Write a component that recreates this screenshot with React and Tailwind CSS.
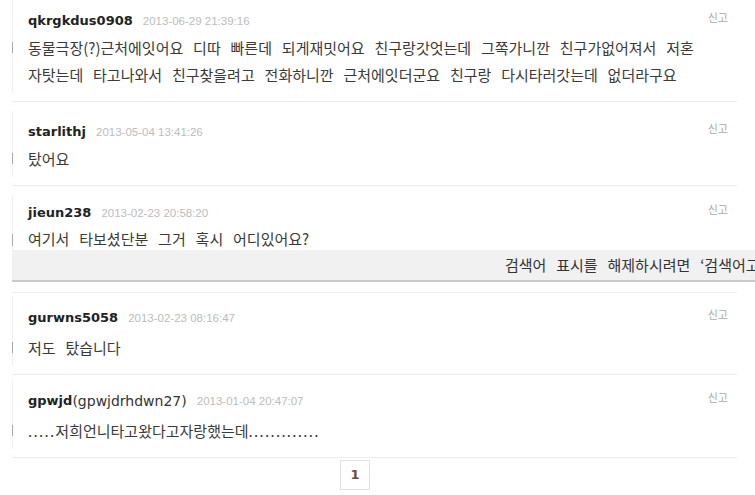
import React from 'react';

const comments = [
  {
    id: 1,
    user: 'qkrgkdus0908',
    date: '2013-06-29 21:39:16',
    lines: [
      '동물극장(?)근처에잇어요 디따 빠른데 되게재밋어요 친구랑갓엇는데 그쪽가니깐 친구가없어져서 저혼',
      '자탓는데 타고나와서 친구찾을려고 전화하니깐 근처에잇더군요 친구랑 다시타러갓는데 없더라구요',
    ],
    mt: 'mt-0',
    pt: 'pt-[11px]',
    bodyMt: 'mt-[3px]',
  },
  {
    id: 2,
    user: 'starlithj',
    date: '2013-05-04 13:41:26',
    lines: ['탔어요'],
    mt: 'mt-[9px]',
    pt: 'pt-[11px]',
    bodyMt: 'mt-[3px]',
  },
];

const laterComments = [
  {
    id: 4,
    user: 'gurwns5058',
    date: '2013-02-23 08:16:47',
    lines: ['저도 탔습니다'],
    mt: 'mt-[4px]',
    pt: 'pt-[11px]',
    bodyMt: 'mt-[6px]',
  },
  {
    id: 5,
    user: 'gpwjd',
    nick: '(gpwjdrhdwn27)',
    date: '2013-01-04 20:47:07',
    lines: ['.....저희언니타고왔다고자랑했는데.............'],
    mt: 'mt-[5px]',
    pt: 'pt-[11px]',
    bodyMt: 'mt-[6px]',
  },
];

const korean = "font-['Noto_Sans_CJK_KR',sans-serif]";
const bodyText = `${korean} whitespace-nowrap text-[15px] text-[#3a3a3a] [word-spacing:6.5px]`;

// runs of dots are set a little looser, like the old bitmap font
function renderLine(line) {
  return line.split(/(\.+)/).map((part, i) =>
    part.startsWith('.') ? (
      <span key={i} className="tracking-[1.3px]">{part}</span>
    ) : (
      <span key={i}>{part}</span>
    )
  );
}

function Header({ user, nick, date }) {
  return (
    <div className="flex h-[20px] items-center">
      <span className="font-['DejaVu_Sans',sans-serif] text-[13px] font-bold text-[#222]">{user}</span>
      {nick && (
        <span className="font-['DejaVu_Sans',sans-serif] text-[14px] text-[#333]">{nick}</span>
      )}
      <span className="ml-[10px] pt-[2px] font-['Liberation_Sans',sans-serif] text-[11.5px] text-[#bcbcbc]">
        {date}
      </span>
    </div>
  );
}

function Report() {
  return (
    <span className={`${korean} self-start text-[11px] leading-[12px] text-[#aaa]`}>신고</span>
  );
}

function CommentRow({ c }) {
  return (
    <div className="ml-[12px] w-[725px] border-b border-[#ececec]">
      <div className={`${c.mt} mb-[8px] flex border-l border-[#efefef] pl-[15px] pr-[9px] ${c.pt} pb-[5px]`}>
        <div className="flex-1">
          <Header user={c.user} nick={c.nick} date={c.date} />
          <div className={`relative ${c.bodyMt}`}>
            <span className="absolute -left-[16px] top-[8px] h-[11px] w-px bg-[#a8a8a8]" />
            {c.lines.map((line, i) => (
              <p key={i} className={`${bodyText} leading-[27px]`}>
                {renderLine(line)}
              </p>
            ))}
          </div>
        </div>
        <Report />
      </div>
    </div>
  );
}

export default function App() {
  return (
    <div className="h-[495px] w-[755px] overflow-hidden bg-white">
      {comments.map((c) => (
        <CommentRow key={c.id} c={c} />
      ))}

      {/* third comment runs straight into the search highlight bar */}
      <div className="ml-[12px] w-[725px]">
        <div className="mt-[9px] flex border-l border-[#efefef] pl-[15px] pr-[9px] pt-[8px]">
          <div className="flex-1">
            <Header user="jieun238" date="2013-02-23 20:58:20" />
            <div className="relative mt-[5px]">
              <span className="absolute -left-[16px] top-[6px] h-[12px] w-px bg-[#a8a8a8]" />
              <p className={`${bodyText} leading-[22px]`}>여기서 타보셨단분 그거 혹시 어디있어요?</p>
            </div>
          </div>
          <Report />
        </div>
      </div>

      <div className="ml-[12px] flex h-[32px] items-center overflow-hidden border-b-2 border-[#c9c9c9] bg-[#f1f1f1] pl-[493px]">
        <span className={`${bodyText} text-[#333]`}>
          검색어 표시를 해제하시려면 ‘검색어고정 해제’를 누르세요
        </span>
      </div>

      <div className="mt-[10px] ml-[12px] w-[725px] border-t border-[#f0f0f0]" />

      {laterComments.map((c) => (
        <CommentRow key={c.id} c={c} />
      ))}

      <div className="mt-[2px] flex w-[710px] justify-center">
        <span className="flex h-[30px] w-[30px] items-center justify-center border border-[#e2e2e2] font-['DejaVu_Sans',sans-serif] text-[13px] font-bold text-[#6e4a3e]">
          1
        </span>
      </div>
    </div>
  );
}
